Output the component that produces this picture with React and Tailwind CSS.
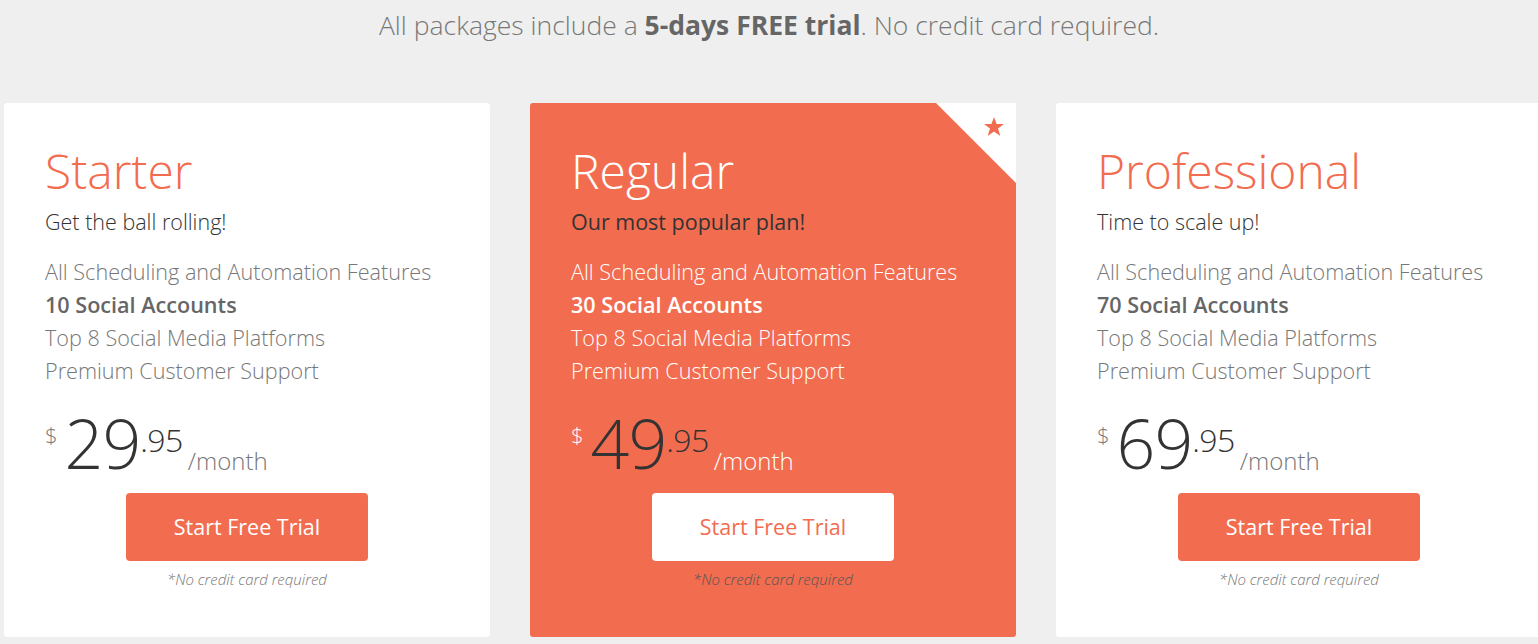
import React from 'react';

const plans = [
  {
    name: 'Starter',
    tagline: 'Get the ball rolling!',
    accounts: '10 Social Accounts',
    dollars: '29',
    featured: false,
  },
  {
    name: 'Regular',
    tagline: 'Our most popular plan!',
    accounts: '30 Social Accounts',
    dollars: '49',
    featured: true,
  },
  {
    name: 'Professional',
    tagline: 'Time to scale up!',
    accounts: '70 Social Accounts',
    dollars: '69',
    featured: false,
  },
];

const PlanCard = ({ plan }) => {
  const f = plan.featured;
  return (
    <div
      className={`relative flex flex-col shrink-0 w-[486px] h-[534px] rounded-[3px] pt-[44px] px-[41px] ${
        f ? 'bg-[#f26c4f]' : 'bg-white'
      }`}
    >
      {f && (
        <svg className="absolute top-0 right-0" width="80" height="80" viewBox="0 0 80 80">
          <polygon points="0,0 80,0 80,80" fill="#ffffff" />
          <polygon
            fill="#f26c4f"
            points="58,14 60.6,21 68,21 62,25.5 64.3,33 58,28.5 51.7,33 54,25.5 48,21 55.4,21"
          />
        </svg>
      )}

      <h2
        className={`text-[48px] leading-[48px] font-light ${f ? 'text-white' : 'text-[#f26c4f]'}`}
      >
        {plan.name}
      </h2>
      <p
        className={`mt-[13px] leading-[28px] text-[#333] ${
          f ? 'text-[21.5px] font-normal' : 'text-[21.5px] font-light'
        }`}
      >
        {plan.tagline}
      </p>

      {/* Features */}
      <ul className={`mt-[19px] text-[21.6px] leading-[33px] font-light ${f ? 'text-white' : 'text-[#777]'}`}>
        <li>All Scheduling and Automation Features</li>
        <li className={`font-semibold ${f ? 'text-white' : 'text-[#666]'}`}>{plan.accounts}</li>
        <li>Top 8 Social Media Platforms</li>
        <li>Premium Customer Support</li>
      </ul>

      {/* Price */}
      <div className="mt-[22px] flex items-start h-[68px]">
        <span className={`mt-[13px] text-[22px] leading-[24px] font-light ${f ? 'text-white' : 'text-[#777]'}`}>
          $
        </span>
        <span className="ml-[7px] text-[68px] leading-[68px] font-light text-[#333] tracking-[-1px]">
          {plan.dollars}
        </span>
        <span className="mt-[15px] text-[32px] leading-[32px] font-light text-[#333] tracking-[-0.5px]">.95</span>
        <span
          className={`ml-[5px] mt-[36px] text-[24px] leading-[32px] font-light ${f ? 'text-white' : 'text-[#777]'}`}
        >
          /month
        </span>
      </div>

      {/* CTA */}
      <button
        className={`mt-[16px] mx-auto w-[242px] h-[68px] rounded-[4px] text-[21.5px] font-normal ${
          f ? 'bg-white text-[#f26c4f]' : 'bg-[#f26c4f] text-white'
        }`}
      >
        Start Free Trial
      </button>
      <p
        className={`mt-[8px] text-center text-[15px] leading-[20px] italic font-light ${
          f ? 'text-[#555]' : 'text-[#777]'
        }`}
      >
        *No credit card required
      </p>
    </div>
  );
};

export default function App() {
  return (
    <div
      className="min-h-screen w-full overflow-hidden bg-[#efefef]"
      style={{ fontFamily: '"Open Sans", "Liberation Sans", sans-serif' }}
    >
      <p className="pt-[7px] text-center text-[26.5px] leading-[36px] font-light text-[#777]">
        All packages include a <span className="font-bold text-[#666]">5-days FREE trial</span>. No credit card required.
      </p>

      <div className="mt-[60px] flex gap-[40px] pl-[4px]">
        {plans.map((p) => (
          <PlanCard key={p.name} plan={p} />
        ))}
      </div>
    </div>
  );
}
